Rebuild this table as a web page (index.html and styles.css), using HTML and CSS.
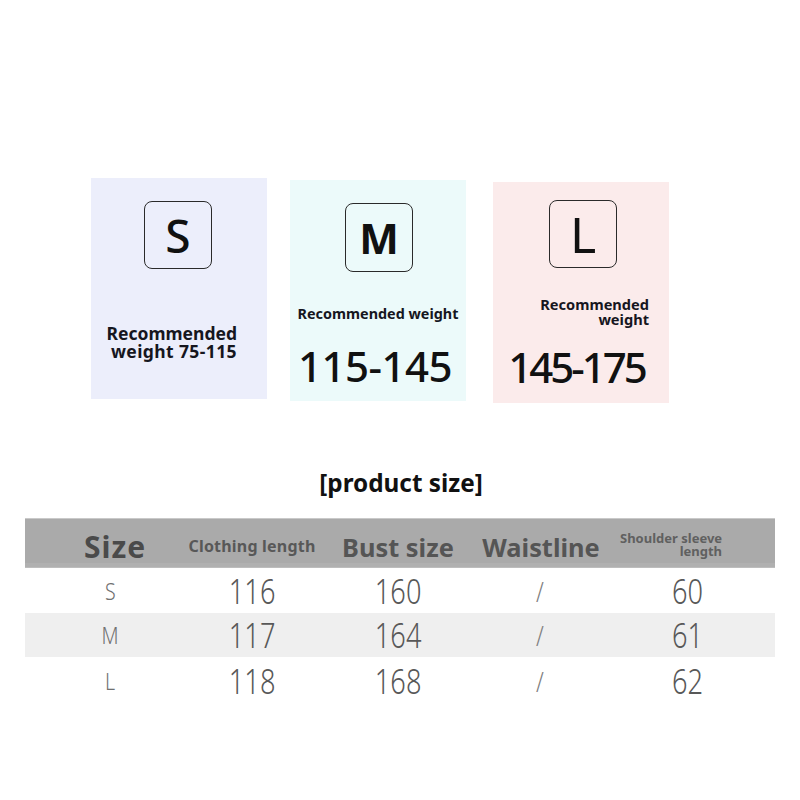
FILE: index.html
```html
<!DOCTYPE html>
<html>
<head>
<meta charset="utf-8">
<link rel="stylesheet" href="styles.css">
</head>
<body>
<div class="page">
  <div class="cards">
    <div class="card card-s">
      <div class="sizebox letter-s">S</div>
      <div class="rec-s">Recommended<br><span class="rec-s2">weight 75-115</span></div>
    </div>
    <div class="card card-m">
      <div class="sizebox letter-m">M</div>
      <div class="rec-m">Recommended weight</div>
      <div class="range range-m">115-145</div>
    </div>
    <div class="card card-l">
      <div class="sizebox letter-l">L</div>
      <div class="rec-l">Recommended<br>weight</div>
      <div class="range range-l">145-175</div>
    </div>
  </div>

  <h1 class="title">[product size]</h1>

  <div class="table">
    <div class="row head">
      <div class="cell h-size">Size</div>
      <div class="cell h-small">Clothing length</div>
      <div class="cell h-big">Bust size</div>
      <div class="cell h-big">Waistline</div>
      <div class="cell h-shoulder">Shoulder sleeve<br>length</div>
    </div>
    <div class="row body">
      <div class="cell letter">S</div>
      <div class="cell num">116</div>
      <div class="cell num">160</div>
      <div class="cell slash">/</div>
      <div class="cell num">60</div>
    </div>
    <div class="row body alt">
      <div class="cell letter">M</div>
      <div class="cell num">117</div>
      <div class="cell num">164</div>
      <div class="cell slash">/</div>
      <div class="cell num">61</div>
    </div>
    <div class="row body last">
      <div class="cell letter">L</div>
      <div class="cell num">118</div>
      <div class="cell num">168</div>
      <div class="cell slash">/</div>
      <div class="cell num">62</div>
    </div>
  </div>
</div>
</body>
</html>
```

FILE: styles.css
```css
html, body {
  margin: 0;
  padding: 0;
  background: #ffffff;
}

body {
  width: 800px;
  height: 800px;
  font-family: "Noto Sans", "Open Sans", sans-serif;
  color: #111;
}

.page {
  padding-top: 178px;
}

.cards {
  display: flex;
  align-items: flex-start;
  padding-left: 91px;
  height: 224px;
}

.card {
  width: 176px;
  height: 221px;
  display: flex;
  flex-direction: column;
  box-sizing: border-box;
}

.card-s {
  background: #eceefb;
  padding-top: 23px;
}

.card-m {
  background: #ecfafa;
  margin-left: 23px;
  margin-top: 2px;
  padding-top: 23px;
}

.card-l {
  background: #fbebeb;
  margin-left: 27px;
  margin-top: 4px;
  padding-top: 18px;
}

.sizebox {
  width: 68px;
  height: 68px;
  box-sizing: border-box;
  border: 1px solid #2a2a2a;
  border-radius: 8px;
  align-self: center;
  display: flex;
  align-items: center;
  justify-content: center;
  line-height: 1;
  color: #111;
}

.card-s .sizebox { margin-left: -2px; }
.card-m .sizebox { margin-left: 2px; height: 69px; }
.card-l .sizebox { margin-left: 4px; }

.letter-s {
  font-size: 46px;
  font-weight: 500;
}

.letter-m {
  font-size: 42px;
  font-weight: 700;
}

.letter-l {
  font-size: 50px;
  font-weight: 400;
}

.rec-s {
  margin-top: 55px;
  padding-right: 30px;
  text-align: right;
  font-size: 17.5px;
  font-weight: 700;
  line-height: 18px;
  color: #16161e;
}

.rec-s2 {
  letter-spacing: 0.4px;
}

.rec-m {
  margin-top: 33px;
  text-align: center;
  font-size: 14.4px;
  font-weight: 700;
  line-height: 18px;
  color: #16161e;
}

.rec-l {
  margin-top: 29px;
  padding-right: 20px;
  text-align: right;
  font-size: 14.6px;
  font-weight: 700;
  line-height: 15px;
  color: #16161e;
}

.range {
  font-size: 42px;
  font-weight: 500;
  line-height: 42px;
  color: #111;
  text-align: center;
}

.range-m {
  margin-top: 22px;
  letter-spacing: -0.5px;
  padding-right: 6px;
}

.range-l {
  margin-top: 19px;
  letter-spacing: -3px;
  padding-right: 9px;
}

.title {
  margin: 0;
  margin-top: 66px;
  text-align: center;
  font-size: 24.3px;
  font-weight: 700;
  line-height: 30px;
  color: #111;
  padding-left: 2px;
}

.table {
  margin: 20px 25px 0 25px;
  width: 750px;
}

.row {
  display: grid;
  grid-template-columns: 138px 138px 154px 132px 160px;
  padding-left: 20px;
  align-items: center;
}

.cell {
  justify-self: center;
  text-align: center;
}

.head {
  background: #aaaaaa;
  height: 50px;
  box-sizing: border-box;
  border-top: 1px solid #c9c9c9;
  border-bottom: 1px solid #bdbdbd;
  box-shadow: inset 0 -4px 0 #b0b0b0;
  color: #4a4a4a;
  font-weight: 700;
  padding-top: 2px;
}

.h-size {
  font-size: 30px;
  letter-spacing: 1px;
  line-height: 30px;
  margin-top: 6px;
  margin-left: 2px;
}

.h-small {
  font-size: 16px;
  letter-spacing: 0.2px;
  line-height: 20px;
  color: #585858;
  margin-top: 4px;
}

.h-big {
  font-size: 25.4px;
  line-height: 28px;
  color: #555555;
  margin-top: 6px;
}

.h-shoulder {
  justify-self: start;
  margin-left: 13px;
  text-align: right;
  font-size: 13px;
  line-height: 13px;
  color: #606060;
  margin-top: 2px;
}

.body {
  height: 45px;
  color: #585858;
  font-weight: 300;
}

.alt {
  background: #efefef;
  height: 44px;
}

.last {
  height: 48px;
}

.num {
  font-size: 34px;
  line-height: 34px;
  transform: scaleX(0.8);
}

.letter {
  font-size: 23px;
  line-height: 24px;
  margin-left: -8px;
  color: #707070;
  transform: scaleX(0.85);
}

.slash {
  font-size: 28px;
  line-height: 28px;
  color: #808080;
  margin-left: -2px;
  transform: scaleX(0.8);
}
```
